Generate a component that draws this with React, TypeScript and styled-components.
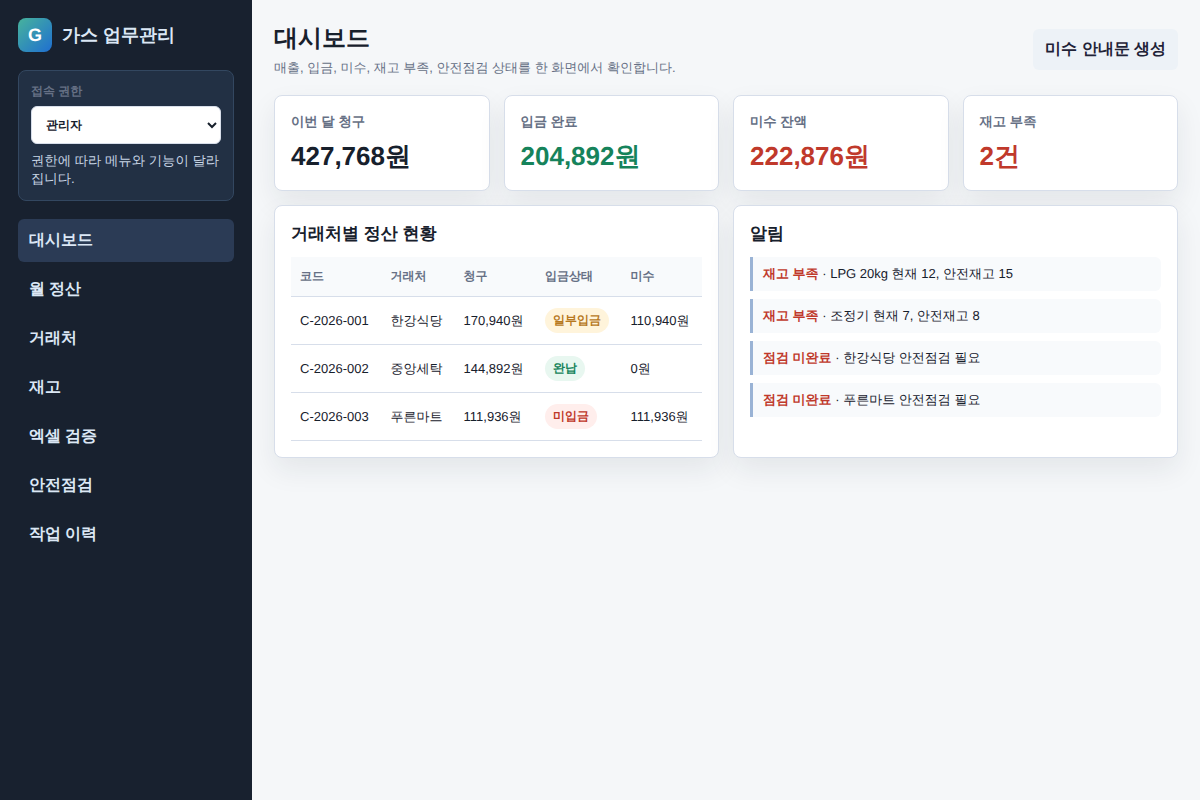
import React, { useState } from "react";
import styled, { createGlobalStyle } from "styled-components";

const GlobalStyle = createGlobalStyle`
  * { box-sizing: border-box; }
  body {
    margin: 0;
    background: #f5f7f9;
    color: #17202c;
    font-family: "Liberation Sans", Arial, sans-serif;
    font-size: 16px;
    line-height: 18px;
    text-rendering: geometricPrecision;
  }
  button, select { font-family: inherit; color: inherit; }
`;

const Shell = styled.div`
  display: grid;
  grid-template-columns: 252px minmax(0, 1fr);
  min-height: 100vh;
`;

const Sidebar = styled.aside`
  display: flex;
  flex-direction: column;
  gap: 18px;
  padding: 18px;
  background: #18212f;
  color: #dbe7f5;
`;

const Brand = styled.div`
  display: flex;
  align-items: center;
  gap: 10px;
  font-size: 18px;
  font-weight: 700;
  line-height: 24px;
`;

const BrandMark = styled.span`
  display: grid;
  place-items: center;
  width: 34px;
  height: 34px;
  border-radius: 8px;
  background: linear-gradient(135deg, #47b39c, #1f6fd1);
  color: #fff;
`;

const RoleBox = styled.div`
  display: flex;
  flex-direction: column;
  padding: 12px;
  border: 1px solid #334760;
  border-radius: 8px;
  background: #223044;
`;

const RoleLabel = styled.label`
  margin-bottom: 6px;
  color: #667085;
  font-size: 12px;
  font-weight: 700;
  line-height: 17px;
`;

const RoleSelect = styled.select`
  height: 38px;
  padding: 0 10px;
  border: 1px solid #d7deea;
  border-radius: 6px;
  background: #fff;
  color: #17202c;
  font-size: 12px;
  font-weight: 700;
`;

const RoleHint = styled.small`
  margin-top: 8px;
  color: #c9d6e6;
`;

const Nav = styled.nav`
  display: flex;
  flex-direction: column;
  gap: 6px;
`;

const NavButton = styled.button<{ $active: boolean }>`
  padding: 11px;
  border: 0;
  border-radius: 6px;
  background: ${(p) => (p.$active ? "#2b3b55" : "transparent")};
  font-size: 16px;
  font-weight: 700;
  line-height: normal;
  text-align: left;
  cursor: pointer;
`;

const Main = styled.main`
  min-width: 0;
  padding: 22px;
`;

const Header = styled.header`
  display: flex;
  align-items: center;
  justify-content: space-between;
  gap: 16px;
  margin-bottom: 18px;
`;

const Title = styled.h1`
  margin: 0 0 4px;
  font-size: 24px;
  line-height: 33px;
`;

const Subtitle = styled.p`
  margin: 0;
  color: #667085;
  font-size: 13px;
`;

const NoticeButton = styled.button`
  padding: 10px 12px;
  border: 0;
  border-radius: 6px;
  background: #edf2f7;
  color: #1f2337;
  font-size: 16px;
  font-weight: 700;
  line-height: normal;
  cursor: pointer;
`;

const Grid = styled.div<{ $columns: number }>`
  display: grid;
  grid-template-columns: repeat(${(p) => p.$columns}, minmax(0, 1fr));
  gap: 14px;
  margin-bottom: 14px;
`;

const Card = styled.section`
  padding: 16px;
  border: 1px solid #d7deea;
  border-radius: 8px;
  background: #fff;
  box-shadow: 0 12px 28px rgba(24, 39, 51, 0.08);
`;

const MetricLabel = styled.small`
  display: block;
  margin-bottom: 6px;
  color: #667085;
  font-weight: 700;
  line-height: 20px;
`;

const MetricValue = styled.div<{ $color: string }>`
  color: ${(p) => p.$color};
  font-size: 26px;
  font-weight: 700;
  line-height: 36px;
`;

const PanelTitle = styled.h2`
  margin: 0 0 12px;
  font-size: 17px;
  line-height: 23px;
`;

const Table = styled.table`
  width: 100%;
  border-collapse: collapse;
  font-size: 13px;
`;

const HeadCell = styled.th`
  padding: 11px 9px;
  border-bottom: 1px solid #d7deea;
  background: #f8fafc;
  color: #667085;
  font-size: 12px;
  line-height: 17px;
  text-align: left;
  white-space: nowrap;
`;

const Cell = styled.td`
  padding: 11px 9px;
  border-bottom: 1px solid #d7deea;
  white-space: nowrap;
`;

const tones = {
  warn: { color: "#b7791f", background: "#fff4db" },
  good: { color: "#16835b", background: "#e8f7f0" },
  bad: { color: "#c0392b", background: "#ffeeec" },
};

const Badge = styled.span<{ $tone: keyof typeof tones }>`
  display: inline-flex;
  padding: 4px 8px;
  border-radius: 999px;
  background: ${(p) => tones[p.$tone].background};
  color: ${(p) => tones[p.$tone].color};
  font-size: 12px;
  font-weight: 700;
  line-height: 17px;
`;

const AlertList = styled.ul`
  display: grid;
  gap: 8px;
  margin: 0;
  padding: 0;
  font-size: 13px;
  list-style: none;
`;

const AlertItem = styled.li`
  padding: 8px 10px;
  border-left: 3px solid #9ab3d5;
  border-radius: 0 6px 6px 0;
  background: #f8fafc;
`;

const AlertKind = styled.strong`
  color: #c0392b;
`;

const menu = ["대시보드", "월 정산", "거래처", "재고", "엑셀 검증", "안전점검", "작업 이력"];

const metrics = [
  { label: "이번 달 청구", value: "427,768원", color: "#17202c" },
  { label: "입금 완료", value: "204,892원", color: "#16835b" },
  { label: "미수 잔액", value: "222,876원", color: "#c0392b" },
  { label: "재고 부족", value: "2건", color: "#c0392b" },
];

const rows: { code: string; name: string; billed: string; status: string; tone: keyof typeof tones; due: string }[] = [
  { code: "C-2026-001", name: "한강식당", billed: "170,940원", status: "일부입금", tone: "warn", due: "110,940원" },
  { code: "C-2026-002", name: "중앙세탁", billed: "144,892원", status: "완납", tone: "good", due: "0원" },
  { code: "C-2026-003", name: "푸른마트", billed: "111,936원", status: "미입금", tone: "bad", due: "111,936원" },
];

const alerts = [
  { kind: "재고 부족", text: "LPG 20kg 현재 12, 안전재고 15" },
  { kind: "재고 부족", text: "조정기 현재 7, 안전재고 8" },
  { kind: "점검 미완료", text: "한강식당 안전점검 필요" },
  { kind: "점검 미완료", text: "푸른마트 안전점검 필요" },
];

export default function App() {
  const [active, setActive] = useState(menu[0]);

  return (
    <>
      <GlobalStyle />
      <Shell>
        <Sidebar>
          <Brand>
            <BrandMark>G</BrandMark>
            <span>가스 업무관리</span>
          </Brand>
          <RoleBox>
            <RoleLabel htmlFor="role">접속 권한</RoleLabel>
            <RoleSelect id="role" defaultValue="관리자">
              <option>관리자</option>
            </RoleSelect>
            <RoleHint>권한에 따라 메뉴와 기능이 달라집니다.</RoleHint>
          </RoleBox>
          <Nav>
            {menu.map((item) => (
              <NavButton key={item} type="button" $active={item === active} onClick={() => setActive(item)}>
                {item}
              </NavButton>
            ))}
          </Nav>
        </Sidebar>
        <Main>
          <Header>
            <div>
              <Title>대시보드</Title>
              <Subtitle>매출, 입금, 미수, 재고 부족, 안전점검 상태를 한 화면에서 확인합니다.</Subtitle>
            </div>
            <NoticeButton type="button">미수 안내문 생성</NoticeButton>
          </Header>
          <Grid $columns={4}>
            {metrics.map((m) => (
              <Card key={m.label}>
                <MetricLabel>{m.label}</MetricLabel>
                <MetricValue $color={m.color}>{m.value}</MetricValue>
              </Card>
            ))}
          </Grid>
          <Grid $columns={2}>
            <Card>
              <PanelTitle>거래처별 정산 현황</PanelTitle>
              <Table>
                <thead>
                  <tr>
                    {["코드", "거래처", "청구", "입금상태", "미수"].map((h) => (
                      <HeadCell key={h} scope="col">{h}</HeadCell>
                    ))}
                  </tr>
                </thead>
                <tbody>
                  {rows.map((r) => (
                    <tr key={r.code}>
                      <Cell>{r.code}</Cell>
                      <Cell>{r.name}</Cell>
                      <Cell>{r.billed}</Cell>
                      <Cell><Badge $tone={r.tone}>{r.status}</Badge></Cell>
                      <Cell>{r.due}</Cell>
                    </tr>
                  ))}
                </tbody>
              </Table>
            </Card>
            <Card>
              <PanelTitle>알림</PanelTitle>
              <AlertList>
                {alerts.map((a) => (
                  <AlertItem key={a.text}>
                    <AlertKind>{a.kind}</AlertKind> · {a.text}
                  </AlertItem>
                ))}
              </AlertList>
            </Card>
          </Grid>
        </Main>
      </Shell>
    </>
  );
}
